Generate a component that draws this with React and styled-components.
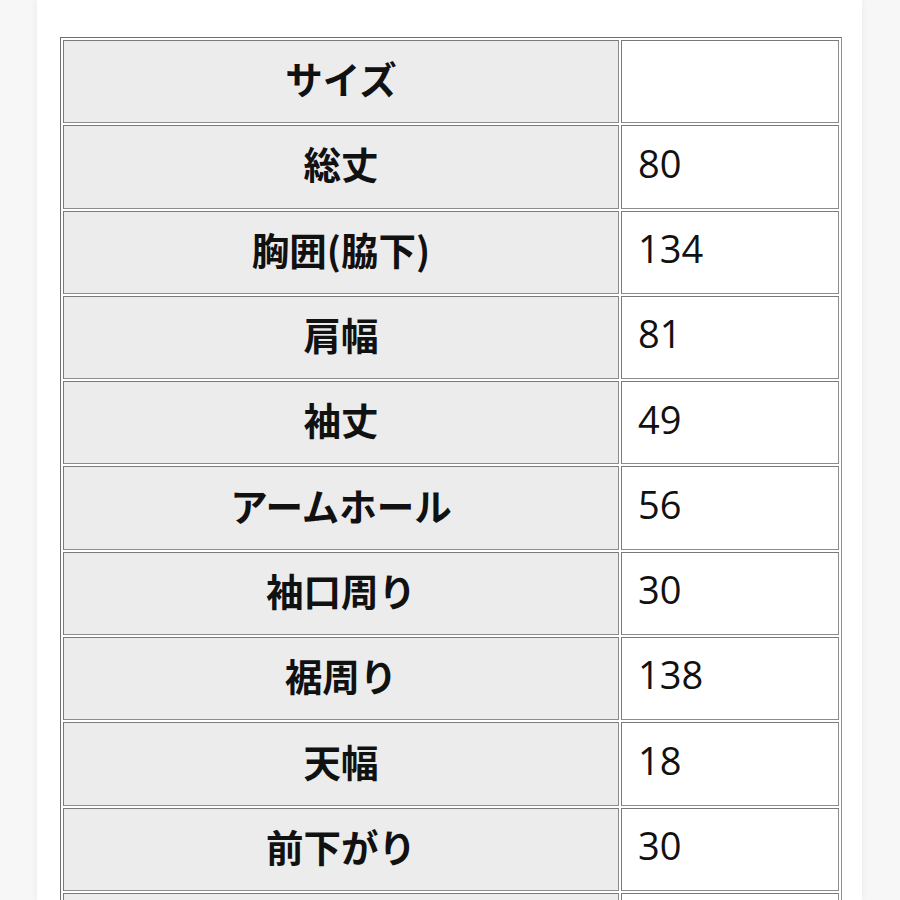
import React from "react";
import styled, { createGlobalStyle } from "styled-components";

const Global = createGlobalStyle`
  html, body { margin: 0; padding: 0; background: #f7f7f7; }
  body { font-family: "Noto Sans CJK JP", "Noto Sans", sans-serif; color: #111; }
`;

const Page = styled.div`
  width: 825px;
  margin-left: 37px;
  height: 900px;
  overflow: hidden;
  background: #ffffff;
  box-shadow: 0 0 8px rgba(0, 0, 0, 0.06);
  padding: 37px 0 0 23px;
  box-sizing: border-box;
`;

const Table = styled.table`
  width: 782px;
  border-collapse: separate;
  border-spacing: 2px;
  border: 1px solid #6f6f6f;
  border-bottom-color: #8f8f8f;
  border-right-color: #8f8f8f;
  table-layout: fixed;
`;

const Label = styled.th`
  width: 556px;
  height: 83.3px;
  box-sizing: border-box;
  padding: 0 0 8px 0;
  background: #ececec;
  border: 1px solid #7a7a7a;
  border-bottom-color: #8c8c8c;
  border-right-color: #8c8c8c;
  font-family: "Noto Sans CJK JP", sans-serif;
  font-size: 37.5px;
  font-weight: 600;
  text-align: center;
  vertical-align: middle;
  line-height: 1.2;
`;

const Value = styled.td`
  height: 83.3px;
  box-sizing: border-box;
  padding: 0 0 7px 16px;
  background: #ffffff;
  border: 1px solid #7a7a7a;
  border-bottom-color: #8c8c8c;
  border-right-color: #8c8c8c;
  font-family: "Open Sans", "Noto Sans CJK JP", sans-serif;
  font-size: 38px;
  font-weight: 400;
  text-align: left;
  vertical-align: middle;
  line-height: 1.2;
`;

const rows = [
  ["サイズ", ""],
  ["総丈", "80"],
  ["胸囲(脇下)", "134"],
  ["肩幅", "81"],
  ["袖丈", "49"],
  ["アームホール", "56"],
  ["袖口周り", "30"],
  ["裾周り", "138"],
  ["天幅", "18"],
  ["前下がり", "30"],
  ["", ""],
];

export default function App() {
  return (
    <>
      <Global />
      <Page>
        <Table>
          <tbody>
            {rows.map(([k, v], i) => (
              <tr key={i}>
                <Label>{k}</Label>
                <Value>{v}</Value>
              </tr>
            ))}
          </tbody>
        </Table>
      </Page>
    </>
  );
}
